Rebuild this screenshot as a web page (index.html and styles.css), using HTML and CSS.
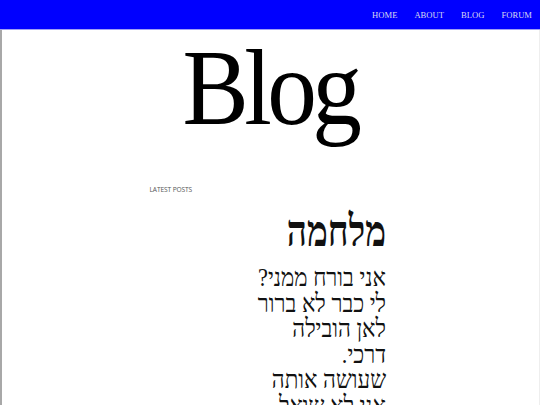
FILE: index.html
```html
<!DOCTYPE html>
<html lang="en">
<head>
<meta charset="utf-8">
<title>Blog</title>
<link rel="stylesheet" href="styles.css">
</head>
<body>
<header class="topbar">
  <nav class="nav">
    <a href="#">HOME</a>
    <a href="#">ABOUT</a>
    <a href="#">BLOG</a>
    <a href="#">FORUM</a>
  </nav>
</header>
<main class="page">
  <h1 class="title">Blog</h1>
  <section class="posts">
    <div class="label">LATEST POSTS</div>
    <article class="post" dir="rtl" lang="he">
      <h2 class="post-title">מלחמה</h2>
      <p class="poem">אני בורח ממני?<br>לי כבר לא ברור<br>לאן הובילה<br>דרכי.<br>שעושה אותה<br>אני לא שואל<br>ואני לא יודע</p>
    </article>
  </section>
</main>
</body>
</html>
```
FILE: styles.css
```css
html, body {
  margin: 0;
  padding: 0;
  background: #ffffff;
}
body {
  font-family: "Liberation Serif", serif;
  overflow: hidden;
  height: 405px;
}
.topbar {
  height: 29px;
  background: #0000ff;
  border-bottom: 1px solid #9f9ff5;
  display: flex;
  justify-content: flex-end;
  align-items: center;
}
.nav {
  display: flex;
  gap: 17px;
  padding-right: 8px;
  padding-top: 1px;
}
.nav a {
  color: #d8d8f0;
  text-decoration: none;
  font-family: "Liberation Serif", serif;
  font-size: 8.6px;
}
.page {
  border-left: 2px solid #a8a8a8;
  border-right: 1px solid #eeeeee;
  min-height: 375px;
  display: flex;
  flex-direction: column;
  align-items: center;
}
.title {
  margin: 0;
  font-family: "Liberation Serif", serif;
  font-weight: normal;
  font-size: 108px;
  line-height: 116px;
  letter-spacing: -5px;
  color: #000;
  text-align: center;
  transform: scaleX(0.92);
}
.posts {
  width: 236px;
  margin-top: 39px;
  margin-left: -6px;
}
.label {
  font-family: "Open Sans", sans-serif;
  font-size: 6.6px;
  color: #555;
  letter-spacing: -0.1px;
}
.post {
  text-align: right;
  margin-top: 16px;
}
.post-title {
  margin: 0;
  font-family: "Liberation Serif", serif;
  font-weight: bold;
  font-size: 44px;
  line-height: 44px;
  color: #111;
  transform: scaleX(0.8);
  transform-origin: right center;
}
.poem {
  margin: 11px 0 0 0;
  font-family: "Liberation Serif", serif;
  font-size: 26px;
  line-height: 25.5px;
  color: #111;
  transform: scaleX(0.86);
  transform-origin: right center;
}
```
